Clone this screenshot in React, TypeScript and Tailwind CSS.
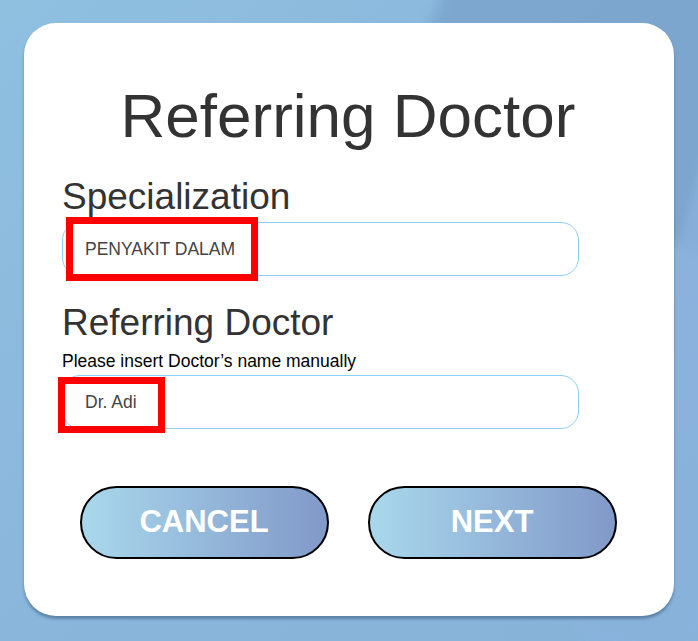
export default function App() {
  return (
    <div
      className="relative w-[698px] h-[641px] overflow-hidden bg-gradient-to-br from-[#8fc0e0] via-[#8ab6dc] to-[#86b2d8]"
      style={{ fontFamily: '"Liberation Sans", Arial, sans-serif' }}
    >
      {/* soft background shapes */}
      <div className="absolute -top-[40px] left-[420px] w-[420px] h-[260px] rotate-[20deg] bg-[#7aa3cc] opacity-80 rounded-[40px] blur-[6px]" />
      <div className="absolute top-[60px] left-[650px] w-[120px] h-[600px] rotate-[15deg] bg-[#8bb2dd] opacity-70 blur-[4px]" />

      <div className="relative pt-[23px] pl-[24px]">
        <div className="w-[650px] h-[593px] bg-white rounded-[32px] shadow-[0_3px_3px_rgba(40,70,100,0.45)] flex flex-col pt-[57px]">
          <h1 className="text-center text-[62px] leading-[72px] text-[#333] pr-[2px]">Referring Doctor</h1>

          <div className="pl-[38px] flex flex-col">
            <label className="mt-[24px] text-[37px] leading-[42px] text-[#333]">Specialization</label>
            <div className="relative mt-[4px] w-[517px] h-[54px] border border-[#8fd0f2] rounded-[18px] flex items-center pl-[22px] text-[17.5px] text-[#444]">
              PENYAKIT DALAM
              <div className="absolute left-[3px] -top-[6px] w-[192px] h-[64px] border-[7px] border-[#ff0000]" />
            </div>

            <label className="mt-[26px] text-[37px] leading-[42px] text-[#333]">Referring Doctor</label>
            <p className="mt-[7px] text-[17.5px] leading-[20px] text-black">Please insert Doctor’s name manually</p>
            <div className="relative mt-[4px] w-[517px] h-[54px] border border-[#8fd0f2] rounded-[18px] flex items-center pl-[22px] text-[17.5px] text-[#444]">
              Dr. Adi
              <div className="absolute -left-[5px] top-[1px] w-[107px] h-[56px] border-[7px] border-[#ff0000]" />
            </div>
          </div>

          <div className="mt-[57px] flex justify-center gap-[39px] pr-[2px]">
            <button className="w-[249px] h-[73px] rounded-full border-2 border-black bg-gradient-to-r from-[#a9d8ec] to-[#8199c8] text-white font-bold text-[31px]">
              CANCEL
            </button>
            <button className="w-[249px] h-[73px] rounded-full border-2 border-black bg-gradient-to-r from-[#a9d8ec] to-[#8199c8] text-white font-bold text-[31px]">
              NEXT
            </button>
          </div>
        </div>
      </div>
    </div>
  );
}
